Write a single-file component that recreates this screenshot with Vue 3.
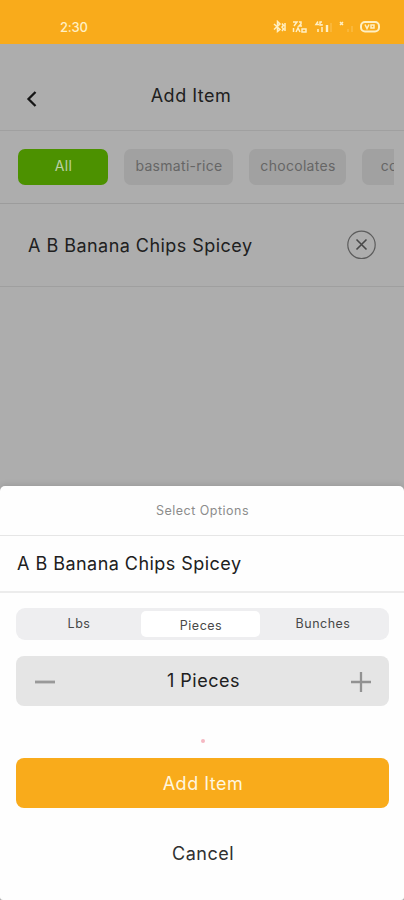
<script setup>
import { ref } from 'vue'

const categories = ['All', 'basmati-rice', 'chocolates', 'cookies']
const activeCategory = ref('All')
const units = ['Lbs', 'Pieces', 'Bunches']
const unit = ref('Pieces')
const quantity = ref(1)
const product = 'A B Banana Chips Spicey'
</script>

<template>
  <div class="screen">
    <header class="status">
      <span class="time">2:30</span>
      <svg class="indicators" width="108" height="14" viewBox="0 0 108 14" fill="none" stroke="#fff0c4" stroke-width="1.500">
        <path d="M1 4l6 5.500-2.500 2V1.500L7 4l-6 5.500M9 3.500l1.500 2-1.500 1.500 1.500 2-1.500 2M12 3v8" />
        <path d="M20 2h4l-3 4M26 2h2v2l-2 2h3M20.500 8v4M23 12l2-4 2 4M29 9h4v3h-4z" />
        <path d="M45 1.500l-2 3h3M49 2h-2v3h2V4M45 9v3M49 7v5" />
        <path d="M54 5v7" stroke-width="2.400" />
        <path d="M58 3v9" opacity=".25" />
        <path d="M67 2l3 3M70 2l-3 3" />
        <path d="M75 9v3M79 6v6" opacity=".25" />
        <rect x="88" y="2" width="18" height="9.500" rx="4" stroke-width="2" />
        <path d="M92 4.500l2 4 2-4M98 5h3v3h-3z" />
      </svg>
    </header>

    <div class="backdrop">
      <div class="titlebar">
        <svg class="back" width="12" height="18" viewBox="0 0 12 18" fill="none" stroke="#161616" stroke-width="2.300">
          <path d="M9.500 2L2.500 9l7 7" />
        </svg>
        <h1>Add Item</h1>
      </div>
      <nav class="tabs">
        <button
          v-for="c in categories"
          :key="c"
          class="chip"
          :class="{ active: c === activeCategory }"
          @click="activeCategory = c"
        >{{ c }}</button>
      </nav>
      <div class="item">
        <span class="product">{{ product }}</span>
        <svg width="30" height="30" viewBox="0 0 30 30" fill="none" stroke="#5c5c5c">
          <circle cx="15.500" cy="14.800" r="13.700" stroke-width="1.200" />
          <path d="M10.500 9.500l10 10M20.500 9.500l-10 10" stroke="#484848" stroke-width="1.600" />
        </svg>
      </div>
    </div>

    <section class="sheet">
      <div class="sheet-title">Select Options</div>
      <div class="sheet-product product">{{ product }}</div>
      <div class="segments">
        <button
          v-for="u in units"
          :key="u"
          class="segment"
          :class="{ selected: u === unit }"
          @click="unit = u"
        >{{ u }}</button>
      </div>
      <div class="stepper">
        <svg width="22" height="22" viewBox="0 0 22 22" stroke="#999" stroke-width="2.800" @click="quantity = Math.max(1, quantity - 1)">
          <path d="M1 11h20" />
        </svg>
        <span>{{ quantity }} {{ unit }}</span>
        <svg width="22" height="22" viewBox="0 0 22 22" stroke="#929292" stroke-width="2.300" @click="quantity++">
          <path d="M1 11h20M11 1v20" />
        </svg>
      </div>
      <div class="hint"><i></i></div>
      <button class="primary">Add Item</button>
      <button class="cancel">Cancel</button>
    </section>
  </div>
</template>

<style>
body {
  background: #adadad;
}
</style>

<style scoped>
.screen {
  position: relative;
  width: 404px;
  height: 900px;
  overflow: hidden;
  background: #adadad;
  font-family: Inter, Roboto, sans-serif;
  color: #202020;
}
* {
  box-sizing: border-box;
}
button {
  border: 0;
  padding: 0;
  font-family: inherit;
  background: none;
  color: inherit;
}
.status {
  height: 44px;
  padding: 9px 23px 0 60px;
  display: flex;
  align-items: center;
  justify-content: space-between;
  background: #f9ab1b;
}
.time {
  font-size: 13px;
  font-weight: 500;
  letter-spacing: -0.200px;
  color: #fff0c4;
}
.titlebar {
  height: 87px;
  padding: 17px 26px 0;
  display: grid;
  grid-template-columns: 12px 1fr 12px;
  align-items: center;
  border-bottom: 1px solid #a0a0a0;
}
.back {
  margin-top: 6px;
}
h1 {
  margin: 0 0 0 -22px;
  text-align: center;
  font-size: 18px;
  line-height: 24px;
  font-weight: 400;
  letter-spacing: 0.500px;
}
.tabs {
  height: 72px;
  margin-right: 10px;
  padding: 18px 0 18px 18px;
  display: flex;
  gap: 16px;
  overflow: hidden;
}
.chip {
  flex: none;
  height: 36px;
  padding: 0 0 3px 1px;
  border-radius: 7px;
  background: #a1a1a1;
  color: #666;
  font-size: 14px;
  letter-spacing: 0.300px;
}
.chip:nth-child(1) {
  width: 90px;
}
.chip:nth-child(2) {
  width: 109px;
}
.chip:nth-child(3) {
  width: 97px;
}
.chip:nth-child(4) {
  width: 90px;
}
.chip.active {
  background: #4c9100;
  color: #bcd0a4;
}
.item {
  height: 84px;
  padding: 0 28px;
  display: flex;
  align-items: center;
  justify-content: space-between;
  border-top: 1px solid #9c9c9c;
  border-bottom: 1px solid #9f9f9f;
}
.product {
  font-size: 18px;
  letter-spacing: 0.460px;
  white-space: nowrap;
}
.sheet {
  position: absolute;
  left: 0;
  right: 0;
  bottom: 0;
  height: 414px;
  display: flex;
  flex-direction: column;
  background: #fefefe;
  border-radius: 5px 5px 3px 3px;
  box-shadow: 0 -1px 6px rgba(0, 0, 0, 0.12);
}
.sheet-title {
  height: 50px;
  padding-left: 1px;
  line-height: 49px;
  text-align: center;
  font-size: 12.500px;
  letter-spacing: 0.500px;
  color: #8c8c8c;
  border-bottom: 1px solid #e6e6e6;
}
.sheet-product {
  height: 57px;
  padding-left: 17px;
  line-height: 55px;
  border-bottom: 2px solid #ececec;
}
.segments {
  height: 32px;
  margin: 15px 15px 0 16px;
  padding: 3px 4px 3px 0;
  display: grid;
  grid-template-columns: 125px 119px 1fr;
  border-radius: 9px;
  background: #eeeef0;
}
.segment {
  padding: 0 0 2px 1px;
  font-size: 12.500px;
  letter-spacing: 0.500px;
  color: #484848;
}
.segment.selected {
  padding: 3px 0 0 1px;
  background: #fff;
  border-radius: 5px;
}
.stepper {
  height: 50px;
  margin: 16px 15px 0 16px;
  padding: 0 17px 0 18px;
  display: flex;
  align-items: center;
  justify-content: space-between;
  border-radius: 8px;
  background: #e5e5e5;
  font-size: 18px;
  letter-spacing: 0.500px;
}
.stepper span {
  padding: 0 0 2px 1px;
}
.stepper svg {
  margin-top: 2px;
}
.hint {
  height: 52px;
  padding: 17px 0 0 1px;
  display: flex;
  align-items: center;
  justify-content: center;
}
.hint i {
  width: 4px;
  height: 4px;
  border-radius: 50%;
  background: #f5b8c2;
}
.primary {
  height: 50px;
  margin: 0 15px 0 16px;
  padding-left: 1px;
  border-radius: 8px;
  background: #f9ab1b;
  color: #fff6df;
  font-size: 18px;
  letter-spacing: 0.500px;
}
.cancel {
  height: 90px;
  padding-left: 2px;
  font-size: 18px;
  letter-spacing: 0.500px;
  color: #303030;
}
</style>
